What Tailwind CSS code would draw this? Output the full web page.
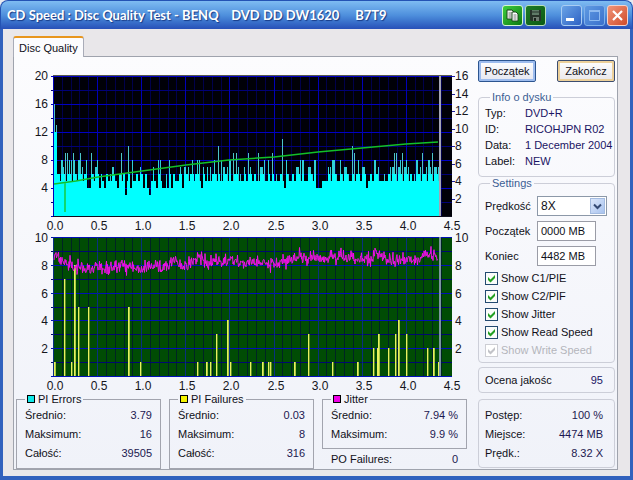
<!doctype html>
<html lang="pl">
    <head>
        <meta charset="UTF-8" />
        <meta name="viewport" content="width=device-width, initial-scale=1.0" />
        <title>CD Speed : Disc Quality Test</title>
        <script src="https://cdn.jsdelivr.net/npm/@tailwindcss/browser@4"></script>
    </head>

    <body
        class="min-h-screen flex flex-col bg-[#e8eaf0] font-['Liberation_Sans',Arial,sans-serif] text-[11px] leading-[12px] text-[#101018]"
    >
        <header
            class="h-[29px] shrink-0 flex items-center pl-[6px] pr-[4px] rounded-t-lg border border-b-0 border-[#2453b4] bg-linear-to-b from-[#7fbcf2] via-[#4f90dd] to-[#2850b8]"
        >
            <h1
                class="flex-1 font-['Lato',sans-serif] font-bold text-[13px] leading-[20px] text-white whitespace-pre text-shadow-[1px_1px_1px_#173a86]"
            >CD Speed : Disc Quality Test - BENQ    DVD DD DW1620     B7T9</h1>
            <div class="flex items-center gap-[2px] mr-[15px]">
                <button
                    aria-label="Copy"
                    class="size-[21px] grid place-items-center rounded-[3px] border border-[#d5f5d0] bg-linear-to-br from-[#3fd03f] to-[#087a10]"
                >
                    <svg class="size-[15px]" viewBox="0 0 15 15">
                        <path d="M2 2h5l2 2v7H2z" fill="#f4f4f0" stroke="#1c4a1c" />
                        <path d="M3.500 5h3M3.500 7h3M3.500 9h3" stroke="#777" />
                        <path d="M7 4h4l2 2v7H7z" fill="#fff" stroke="#1c4a1c" />
                        <path d="M8.500 7h3M8.500 9h3M8.500 11h3" stroke="#777" />
                    </svg>
                </button>
                <button
                    aria-label="Save"
                    class="size-[21px] grid place-items-center rounded-[3px] border border-[#b8dfb8] bg-linear-to-br from-[#1e7c28] to-[#0a5a14]"
                >
                    <svg class="size-[15px]" viewBox="0 0 15 15">
                        <path d="M2 2h11v11H3l-1-1z" fill="#28332c" />
                        <path d="M4 2h7v5H4z" fill="#5f7a68" />
                        <path d="M4 4h7" stroke="#28332c" />
                        <path d="M5 9h6v4H5z" fill="#6e7a72" />
                        <path d="M6 10h2v3H6z" fill="#1a221c" />
                    </svg>
                </button>
            </div>
            <div class="flex items-center gap-[2px]">
                <button
                    aria-label="Minimize"
                    class="size-[21px] rounded-[3px] border border-[#a9cdf3] bg-linear-to-br from-[#6aa3e6] to-[#2f62c4]"
                >
                    <svg class="size-[19px]" viewBox="0 0 19 19">
                        <path d="M4 12h8v3H4z" fill="#fff" />
                    </svg>
                </button>
                <button
                    aria-label="Maximize"
                    disabled
                    class="size-[21px] rounded-[3px] border border-[#7fb0ea] bg-linear-to-br from-[#5f9ae2] to-[#3a70cc]"
                >
                    <svg class="size-[19px]" viewBox="0 0 19 19">
                        <path d="M4.500 5.500h10v9h-10z" fill="none" stroke="#8dbaf0" />
                        <path d="M4 5h11" stroke="#8dbaf0" stroke-width="2" />
                    </svg>
                </button>
                <button
                    aria-label="Close"
                    class="size-[21px] rounded-[3px] border border-[#f3d3cc] bg-linear-to-br from-[#ef9478] to-[#d04a28]"
                >
                    <svg class="size-[19px]" viewBox="0 0 19 19">
                        <path d="M5 5l9 9M14 5l-9 9" stroke="#fff" stroke-width="2.200" />
                    </svg>
                </button>
            </div>
        </header>

        <main
            class="flex-1 flex flex-col items-stretch border-x-3 border-b-4 border-[#3161bd] bg-[#e9e7ea] pt-[7px] pl-[10px] pr-[12px] pb-[6px]"
        >
            <button
                class="relative z-10 self-start -mb-px h-[21px] px-[5px] rounded-t-[3px] border border-b-0 border-t-2 border-[#a9acb8] border-t-[#e8961e] bg-[#fcfcfe] text-[11px]"
            >
                Disc Quality
            </button>

            <section
                class="flex-1 flex gap-2 pr-[2px] border border-[#9fa3ad] bg-linear-to-b from-[#fcfcfe] to-[#f0f2f9]"
            >
                <div class="flex-1 min-w-0">
                    <svg
                        id="charts"
                        class="block w-full font-['Liberation_Sans',Arial,sans-serif] text-[12px]"
                        viewBox="14 57 456 336"
                        role="img"
                        aria-label="PI Errors, PI Failures, Jitter"
                    ></svg>

                    <div class="grid grid-cols-3 gap-2 pl-[2px] pr-[3px]">
                        <fieldset class="border border-[#a2a4ae] px-[8px] pt-px pb-[3px]">
                            <legend class="flex items-center gap-[3px] px-[2px]">
                                <span class="size-[8px] border border-black bg-[#10e8e8]"></span>
                                PI Errors
                            </legend>
                            <dl class="grid grid-cols-[auto_1fr] leading-[19px]">
                                <dt>Średnio:</dt>
                                <dd class="text-right text-[#1c1850]">3.79</dd>
                                <dt>Maksimum:</dt>
                                <dd class="text-right text-[#1c1850]">16</dd>
                                <dt>Całość:</dt>
                                <dd class="text-right text-[#1c1850]">39505</dd>
                            </dl>
                        </fieldset>
                        <fieldset class="border border-[#a2a4ae] px-[8px] pt-px pb-[3px]">
                            <legend class="flex items-center gap-[3px] px-[2px]">
                                <span class="size-[8px] border border-black bg-[#f4f400]"></span>
                                PI Failures
                            </legend>
                            <dl class="grid grid-cols-[auto_1fr] leading-[19px]">
                                <dt>Średnio:</dt>
                                <dd class="text-right text-[#1c1850]">0.03</dd>
                                <dt>Maksimum:</dt>
                                <dd class="text-right text-[#1c1850]">8</dd>
                                <dt>Całość:</dt>
                                <dd class="text-right text-[#1c1850]">316</dd>
                            </dl>
                        </fieldset>
                        <div>
                            <fieldset class="border border-[#a2a4ae] px-[8px] pt-px pb-[4px]">
                                <legend class="flex items-center gap-[3px] px-[2px]">
                                    <span class="size-[8px] border border-black bg-[#f000e8]"></span>
                                    Jitter
                                </legend>
                                <dl class="grid grid-cols-[auto_1fr] leading-[19px]">
                                    <dt>Średnio:</dt>
                                    <dd class="text-right text-[#1c1850]">7.94 %</dd>
                                    <dt>Maksimum:</dt>
                                    <dd class="text-right text-[#1c1850]">9.9 %</dd>
                                </dl>
                            </fieldset>
                            <dl class="flex justify-between px-[9px] leading-[20px]">
                                <dt>PO Failures:</dt>
                                <dd class="text-[#1c1850]">0</dd>
                            </dl>
                        </div>
                    </div>
                </div>

                <aside class="w-[137px] shrink-0 pt-[3px]">
                    <div class="flex justify-between mb-[9px]">
                        <button
                            class="w-[58px] h-[22px] rounded-[2px] border border-[#2c5590] bg-linear-to-b from-white to-[#e4e6f0] inset-ring-2 inset-ring-[#9dbcee]"
                        >
                            Początek
                        </button>
                        <button
                            class="w-[58px] h-[22px] rounded-[2px] border border-[#3c4d70] bg-linear-to-b from-white to-[#e8e6ea] inset-ring-2 inset-ring-[#ecd09a]"
                        >
                            Zakończ
                        </button>
                    </div>

                    <fieldset class="rounded-[4px] border border-[#ccced8] pl-[6px] pt-[2px] pb-[7px]">
                        <legend class="ml-[5px] px-[2px] text-[#3c5f94]">Info o dysku</legend>
                        <dl class="grid grid-cols-[40px_1fr] leading-[16px] whitespace-nowrap">
                            <dt>Typ:</dt>
                            <dd class="text-[#1a1464]">DVD+R</dd>
                            <dt>ID:</dt>
                            <dd class="text-[#1a1464]">RICOHJPN R02</dd>
                            <dt>Data:</dt>
                            <dd class="text-[#1a1464]">1 December 2004</dd>
                            <dt>Label:</dt>
                            <dd class="text-[#1a1464]">NEW</dd>
                        </dl>
                    </fieldset>

                    <fieldset class="rounded-[4px] border border-[#ccced8] pl-[6px] pt-[7px] pb-[3px] mb-[4px]">
                        <legend class="ml-[5px] px-[2px] text-[#3c5f94]">Settings</legend>
                        <div class="grid grid-cols-[52px_1fr] items-center gap-y-[5px] mb-[3px]">
                            <label for="speed">Prędkość</label>
                            <div class="relative w-[70px]">
                                <select
                                    id="speed"
                                    class="block w-full h-[20px] appearance-none border border-[#8c98a8] bg-white pl-[3px] text-[12px] leading-[14px]"
                                >
                                    <option>8X</option>
                                </select>
                                <span
                                    class="absolute right-[2px] inset-y-[2px] w-[15px] grid place-items-center border border-[#a3bbe0] bg-linear-to-br from-[#dbe7fb] to-[#a9c3ee] pointer-events-none"
                                >
                                    <svg class="size-[9px]" viewBox="0 0 9 9">
                                        <path d="M1 2.500l3.500 3.500L8 2.500" fill="none" stroke="#344a74" stroke-width="2" />
                                    </svg>
                                </span>
                            </div>
                            <label for="start">Początek</label>
                            <input
                                id="start"
                                type="text"
                                value="0000 MB"
                                class="w-[59px] h-[20px] border border-[#9a9ca6] bg-white px-[3px]"
                            />
                            <label for="end">Koniec</label>
                            <input
                                id="end"
                                type="text"
                                value="4482 MB"
                                class="w-[59px] h-[20px] border border-[#9a9ca6] bg-white px-[3px]"
                            />
                        </div>
                        <label class="h-[18px] flex items-center gap-[3px] whitespace-nowrap">
                            <span class="grid size-[13px]">
                                <input type="checkbox" checked class="peer [grid-area:1/1] appearance-none border border-[#234a70] bg-[#fafcfa]" />
                                <svg class="hidden peer-checked:block [grid-area:1/1] size-[13px] pointer-events-none" viewBox="0 0 13 13">
                                    <path d="M3 5v3l2.500 2.500L10 6V3L5.500 7.500z" fill="#22a022" />
                                </svg>
                            </span>
                            Show C1/PIE
                        </label>
                        <label class="h-[18px] flex items-center gap-[3px] whitespace-nowrap">
                            <span class="grid size-[13px]">
                                <input type="checkbox" checked class="peer [grid-area:1/1] appearance-none border border-[#234a70] bg-[#fafcfa]" />
                                <svg class="hidden peer-checked:block [grid-area:1/1] size-[13px] pointer-events-none" viewBox="0 0 13 13">
                                    <path d="M3 5v3l2.500 2.500L10 6V3L5.500 7.500z" fill="#22a022" />
                                </svg>
                            </span>
                            Show C2/PIF
                        </label>
                        <label class="h-[18px] flex items-center gap-[3px] whitespace-nowrap">
                            <span class="grid size-[13px]">
                                <input type="checkbox" checked class="peer [grid-area:1/1] appearance-none border border-[#234a70] bg-[#fafcfa]" />
                                <svg class="hidden peer-checked:block [grid-area:1/1] size-[13px] pointer-events-none" viewBox="0 0 13 13">
                                    <path d="M3 5v3l2.500 2.500L10 6V3L5.500 7.500z" fill="#22a022" />
                                </svg>
                            </span>
                            Show Jitter
                        </label>
                        <label class="h-[18px] flex items-center gap-[3px] whitespace-nowrap">
                            <span class="grid size-[13px]">
                                <input type="checkbox" checked class="peer [grid-area:1/1] appearance-none border border-[#234a70] bg-[#fafcfa]" />
                                <svg class="hidden peer-checked:block [grid-area:1/1] size-[13px] pointer-events-none" viewBox="0 0 13 13">
                                    <path d="M3 5v3l2.500 2.500L10 6V3L5.500 7.500z" fill="#22a022" />
                                </svg>
                            </span>
                            Show Read Speed
                        </label>
                        <label class="h-[18px] flex items-center gap-[3px] whitespace-nowrap text-[#b4b5bc]">
                            <span class="grid size-[13px]">
                                <input type="checkbox" checked disabled class="peer [grid-area:1/1] appearance-none border border-[#cdced4] bg-white" />
                                <svg class="hidden peer-checked:block [grid-area:1/1] size-[13px] pointer-events-none" viewBox="0 0 13 13">
                                    <path d="M3 5v3l2.500 2.500L10 6V3L5.500 7.500z" fill="#c2c3c8" />
                                </svg>
                            </span>
                            Show Write Speed
                        </label>
                    </fieldset>

                    <dl
                        class="flex justify-between rounded-[4px] border border-[#ccced8] pl-[6px] pr-[11px] leading-[24px] mb-[6px]"
                    >
                        <dt>Ocena jakośc</dt>
                        <dd class="text-[#1a1464]">95</dd>
                    </dl>

                    <dl
                        class="grid grid-cols-[auto_1fr] rounded-[4px] border border-[#ccced8] pl-[6px] pr-[11px] pt-[6px] pb-[4px] leading-[19px]"
                    >
                        <dt>Postęp:</dt>
                        <dd class="text-right text-[#1c1850]">100 %</dd>
                        <dt>Miejsce:</dt>
                        <dd class="text-right text-[#1c1850]">4474 MB</dd>
                        <dt>Prędk.:</dt>
                        <dd class="text-right text-[#1c1850]">8.32 X</dd>
                    </dl>
                </aside>
            </section>
        </main>

        <script>
            const svg = document.getElementById("charts");
            const X0 = 53; // left edge of both plots
            const X1 = 452; // right edge of both plots
            const GB = 88.2; // width of one gigabyte
            const END = 440; // where the disc ends

            function add(name, attrs, text) {
                const el = document.createElementNS(
                    "http://www.w3.org/2000/svg",
                    name,
                );
                for (const key in attrs) {
                    el.setAttribute(key, attrs[key]);
                }
                if (text !== undefined) {
                    el.textContent = text;
                }
                svg.appendChild(el);
            }

            function rect(x, y, width, height, fill) {
                add("rect", {
                    x,
                    y,
                    width,
                    height,
                    fill,
                    "shape-rendering": "crispEdges",
                });
            }

            function label(x, y, anchor, text) {
                add("text", { x, y, "text-anchor": anchor, fill: "#15151c", "font-size": 12 }, text);
            }

            function drawGrid(top, bottom, rows, colors) {
                rect(X0, top, X1 - X0, bottom - top, colors.back);
                for (let i = 1; i < 45; i++) {
                    if (i % 5) {
                        rect(Math.round(X0 + (i * GB) / 10), top, 1, bottom - top, colors.minor);
                    }
                }
                for (let i = 0; i <= rows; i++) {
                    const y = Math.round(bottom - (i * (bottom - top)) / rows);
                    rect(X0 - 2, y, X1 - X0 + 2, 1, i % 2 ? colors.rowMinor : colors.row);
                }
                for (let i = 0; i < 10; i++) {
                    const x = Math.round(X0 + (i * GB) / 2);
                    if (i < 9) {
                        rect(x, top, 1, bottom - top, colors.major);
                    }
                    label(x + 2, bottom + 14, "middle", (i / 2).toFixed(1));
                }
            }

            // --- PI Errors and read speed ---
            const pie = [
                16, 13, 6, 5, 8, 7, 9, 9, 8, 8, 9, 8, 6, 8, 9, 7, 6, 8, 4, 4, 9,
                6, 7, 8, 4, 6, 5, 4, 6, 5, 6, 7, 6, 5, 4, 6, 9, 6, 3, 5, 10, 4,
                8, 5, 6, 5, 7, 6, 4, 6, 4, 3, 5, 7, 5, 4, 8, 8, 4, 4, 6, 4, 8, 4,
                6, 5, 5, 6, 7, 4, 7, 6, 7, 6, 8, 5, 6, 8, 8, 4, 7, 5, 7, 5, 7, 6,
                8, 6, 10, 5, 8, 7, 6, 7, 8, 5, 9, 6, 9, 7,
            ];
            const pieRest = [
                6, 5, 7, 5, 9, 7, 5, 6, 5, 9, 7, 7, 8, 5, 8, 5, 9, 5, 6, 5, 6,
                11, 4, 8, 6, 5, 6, 5, 7, 7, 8, 8, 5, 5, 7, 7, 6, 8, 4, 4, 4, 5,
                5, 5, 7, 7, 8, 8, 6, 5, 8, 6, 7, 7, 6, 5, 10, 9, 6, 8, 5, 7, 7,
                4, 5, 6, 5, 8, 6, 7, 5, 5, 6, 5, 6, 7, 7, 9, 9, 7, 8, 9, 7, 8, 7,
                6, 5, 6, 8, 6, 7, 9, 6, 7, 8, 7, 9, 7, 7, 7,
            ];

            function drawErrors(values, from, to) {
                const step = (to - from) / values.length;
                values.forEach((value, i) => {
                    const x = Math.round(from + i * step);
                    const next = Math.round(from + (i + 1) * step);
                    const low = Math.min(value, i % 3 ? 6 : 5);
                    rect(x, 216 - low * 7, next - x, low * 7, "#00ffff");
                    if (value > low) {
                        const wide = value < 9 && i % 3 === 1;
                        rect(x, 216 - value * 7, wide ? next - x : 1, (value - low) * 7, value > 8 ? "#4cc4c8" : "#30d0d8");
                    }
                });
            }

            drawGrid(76, 216, 10, {
                back: "#000008",
                minor: "#00004c",
                major: "#0000b8",
                row: "#0000c4",
                rowMinor: "#000078",
            });
            rect(X0, 75, X1 - X0, 1, "#55584c");
            drawErrors(pie, 54, 240);
            drawErrors(pieRest, 240, END);
            rect(54, 132, 3, 84, "#00ffff");
            rect(X0, 216, X1 - X0, 1, "#101020");
            rect(END - 1, 76, 2, 140, "#a4a4b4");
            add("polyline", {
                points: "54,184 76,181 98,177 142,171 186,165 229,160 274,157 318,152 362,148 406,144 438,142",
                fill: "none",
                stroke: "#12c028",
                "stroke-width": 1.5,
            });
            rect(64, 183, 2, 29, "#10d870");

            for (let v = 4; v <= 20; v += 4) {
                label(48, 220 - v * 7, "end", v);
            }
            for (let v = 2; v <= 16; v += 2) {
                const y = Math.round(216 - v * 8.75);
                rect(X1, y, 3, 1, "#2020a0");
                label(455, y + 4, "start", v);
            }

            // --- PI Failures and jitter ---
            drawGrid(237, 376, 10, {
                back: "#004c04",
                minor: "#002424",
                major: "#083080",
                row: "#0010b8",
                rowMinor: "#000870",
            });

            const pif = [
                [54, 1], [64, 7], [71, 1], [74, 8], [78, 5], [88, 5], [128, 5],
                [140, 1], [197, 1], [206, 1], [210, 1], [216, 3], [227, 4],
                [230, 1], [250, 1], [262, 1], [268, 1], [270, 1], [294, 1],
                [308, 3], [332, 1], [357, 1], [373, 2], [377, 2], [378, 3],
                [388, 2], [395, 3], [398, 4], [406, 3], [427, 2], [433, 2],
                [438, 1],
            ];
            pif.forEach(([x, v], i) => {
                const y = Math.round(376 - v * 13.9);
                rect(x, y, 1, 376 - y, "#e8f060");
                rect(x + 1, y, 1, 376 - y, i % 3 ? "#5c8c20" : "#a8c840");
            });

            const jitter = [
                [54, 8.8], [62, 8.2], [73, 8.1], [80, 7.7], [97, 7.7],
                [108, 7.6], [115, 7.9], [130, 7.8], [143, 7.6], [153, 7.9],
                [163, 7.7], [173, 8.2], [183, 7.9], [200, 8.5], [207, 8.1],
                [220, 8.2], [230, 8.4], [240, 8.1], [262, 8.2], [273, 8.1],
                [290, 8.3], [297, 8.6], [307, 8.4], [313, 8.7], [323, 8.3],
                [337, 8.6], [353, 8.4], [370, 8.4], [377, 8.8], [383, 8.3],
                [400, 8.3], [417, 8.4], [427, 8.9], [438, 8.6],
            ];
            let seed = 7;
            function noise() {
                seed = (seed * 16807) % 2147483647;
                return seed / 2147483647 - 0.5;
            }
            const points = [];
            let k = 0;
            for (let x = 54; x < 438; x += 0.5) {
                while (x > jitter[k + 1][0]) {
                    k++;
                }
                const [xa, a] = jitter[k];
                const [xb, b] = jitter[k + 1];
                const mid = a + ((b - a) * (x - xa)) / (xb - xa);
                const v = mid + noise() * 0.5 + noise() * noise() * 2.4;
                points.push(`${x.toFixed(1)},${(376 - v * 13.9).toFixed(1)}`);
            }
            add("polyline", {
                points: points.join(" "),
                fill: "none",
                stroke: "#f010e8",
                "stroke-width": 1,
            });
            rect(END - 1, 237, 2, 139, "#7c94a0");

            for (let v = 2; v <= 10; v += 2) {
                const y = Math.round(380 - v * 13.9) + 1;
                label(48, y, "end", v);
                label(455, y, "start", v);
            }
        </script>
    </body>
</html>
